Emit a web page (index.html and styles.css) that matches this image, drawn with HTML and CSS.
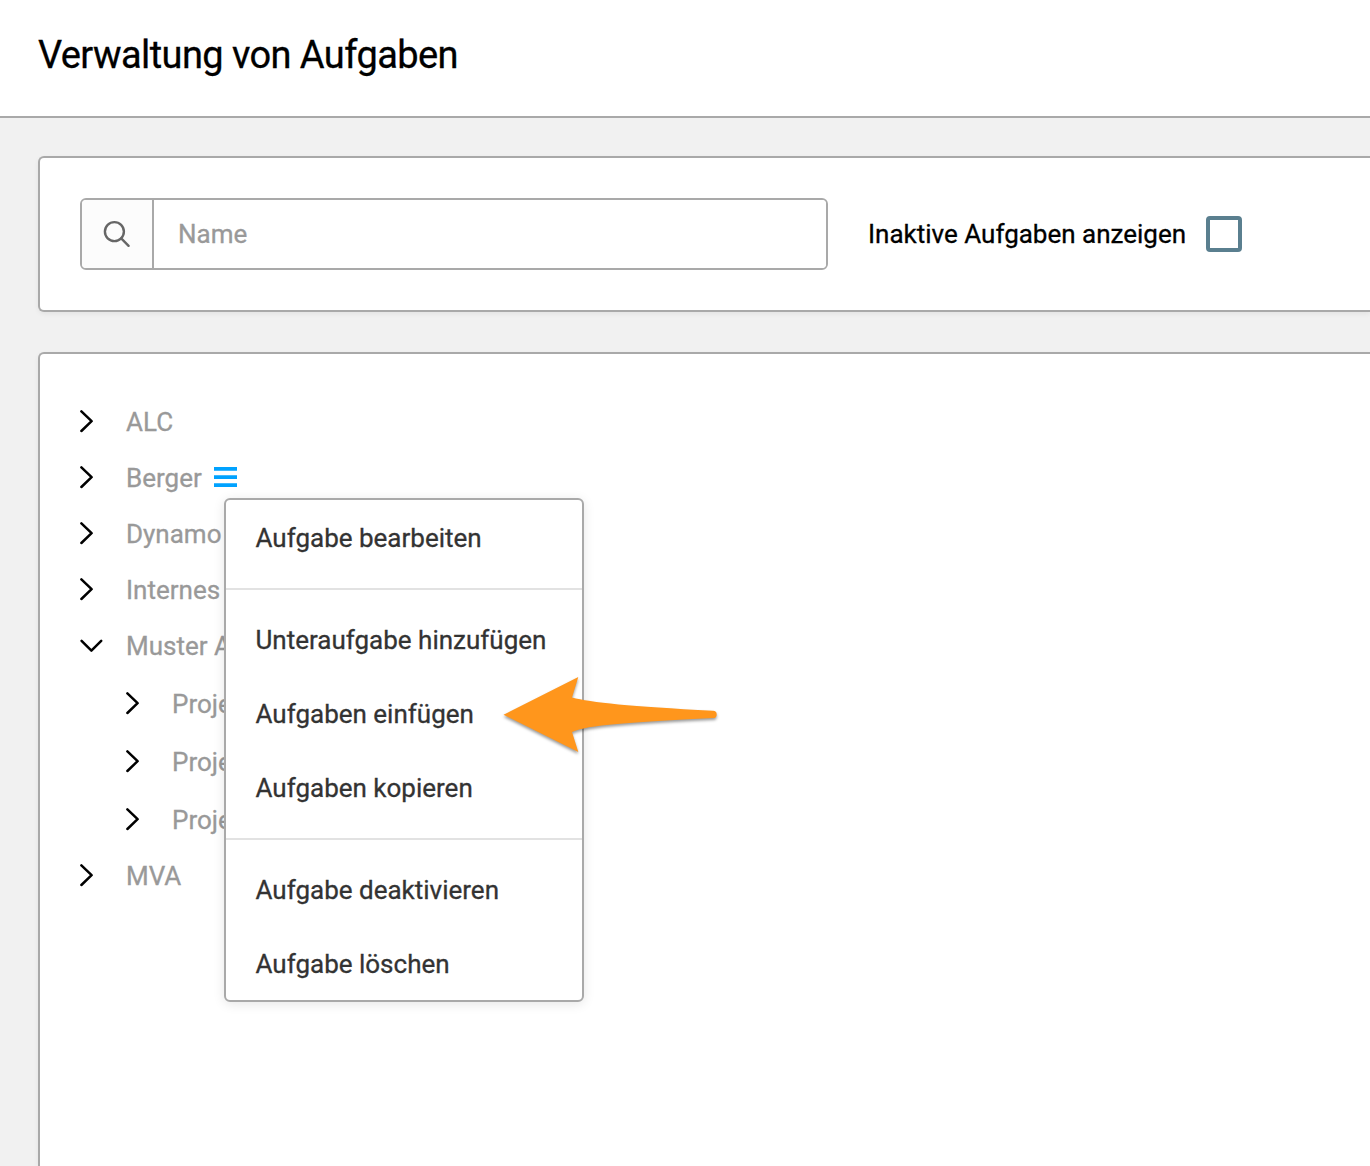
FILE: index.html
```html
<!DOCTYPE html>
<html lang="de">
<head>
<meta charset="utf-8">
<title>Verwaltung von Aufgaben</title>
<link rel="stylesheet" href="styles.css">
</head>
<body>
<svg class="sprite" aria-hidden="true">
  <symbol id="right" viewBox="0 0 26 26"><path d="M1.4 3.4 11.6 13.2 1.4 23"/></symbol>
  <symbol id="down" viewBox="0 0 26 26"><path d="M1.6 8.8 11.4 18.6 21.2 8.8"/></symbol>
</svg>
<header class="header"><h1 class="title">Verwaltung von Aufgaben</h1></header>
<main class="main">
  <section class="panel filter">
    <div class="search">
      <span class="search-icon"><svg width="30" height="30" viewBox="0 0 30 30"><circle cx="12.4" cy="12.6" r="9.5"/><path d="M19.2 19.4 26.6 26.8"/></svg></span>
      <input class="search-input" type="text" placeholder="Name" aria-label="Name">
    </div>
    <label class="inactive"><span class="inactive-text">Inaktive Aufgaben anzeigen</span><input class="checkbox" type="checkbox"></label>
  </section>
  <section class="panel tasks">
    <ul class="tree">
      <li class="row"><svg class="chevron"><use href="#right"/></svg><span class="label">ALC</span></li>
      <li class="row"><svg class="chevron"><use href="#right"/></svg><span class="label">Berger</span>
        <svg class="burger" width="24" height="20" viewBox="0 0 24 20"><path d="M0 0h23v3.7H0zM0 8.2h23v3.7H0zM0 16.3h23V20H0z"/></svg>
        <div class="menu">
          <div class="group"><div class="item">Aufgabe bearbeiten</div></div>
          <div class="group">
            <div class="item">Unteraufgabe hinzufügen</div>
            <div class="item">Aufgaben einfügen
              <svg class="arrow" width="230" height="90" viewBox="0 0 230 90"><path d="M3.5 44.7 78.3 7 72 27.4C91 32.5 130 36.2 213 40.7A3.7 3.7 0 0 1 213 48.1C130 52.3 88 55 72 62L78.3 82Z"/></svg>
            </div>
            <div class="item">Aufgaben kopieren</div>
          </div>
          <div class="group">
            <div class="item">Aufgabe deaktivieren</div>
            <div class="item">Aufgabe löschen</div>
          </div>
        </div>
      </li>
      <li class="row"><svg class="chevron"><use href="#right"/></svg><span class="label">Dynamo</span></li>
      <li class="row"><svg class="chevron"><use href="#right"/></svg><span class="label">Internes</span></li>
      <li>
        <div class="row"><svg class="chevron"><use href="#down"/></svg><span class="label">Muster AG</span></div>
        <ul class="subtree">
          <li class="row subrow"><svg class="chevron"><use href="#right"/></svg><span class="label">Projekt</span></li>
          <li class="row subrow"><svg class="chevron"><use href="#right"/></svg><span class="label">Projekt</span></li>
          <li class="row subrow"><svg class="chevron"><use href="#right"/></svg><span class="label">Projekt</span></li>
        </ul>
      </li>
      <li class="row"><svg class="chevron"><use href="#right"/></svg><span class="label">MVA</span></li>
    </ul>
  </section>
</main>
</body>
</html>
```
FILE: styles.css
```css
* { box-sizing: border-box; }
body {
  margin: 0;
  height: 1166px;
  display: flex;
  flex-direction: column;
  overflow: hidden;
  background: #f1f1f1;
  color: #000;
  font: 26px/30px Roboto, sans-serif;
  -webkit-text-stroke: .3px currentColor;
}
ul { margin: 0; padding: 0; list-style: none; }
.sprite { display: none; }
.header {
  height: 118px;
  flex: none;
  padding: 33px 38px 0;
  background: #fff;
  border-bottom: 2px solid #a9a9a9;
}
.title { margin: 0; font-size: 38px; line-height: 45px; font-weight: 400; letter-spacing: -.58px; }
.main {
  flex: 1;
  display: flex;
  flex-direction: column;
  gap: 40px;
  padding: 38px 0 0 38px;
}
.panel {
  background: #fff;
  border: 2px solid #a9a9a9;
  border-right: 0;
  border-radius: 6px 0 0 6px;
  box-shadow: 0 2px 5px rgba(0, 0, 0, .06);
}
.filter { flex: none; height: 156px; padding: 40px; display: flex; gap: 40px; }
.search {
  display: flex;
  width: 748px;
  height: 72px;
  border: 2px solid #a9a9a9;
  border-radius: 6px;
  overflow: hidden;
}
.search-icon {
  width: 72px;
  flex: none;
  padding: 19px 0 0 20px;
  background: #fcfcfc;
  border-right: 2px solid #a9a9a9;
}
.search-icon svg { display: block; fill: none; stroke: #666; stroke-width: 2.4; stroke-linecap: round; }
.search-input {
  flex: 1;
  min-width: 0;
  border: 0;
  padding: 0 24px;
  font: inherit;
  background: #fff;
}
.search-input::placeholder { color: #999; opacity: 1; }
.inactive { display: flex; align-items: center; gap: 20px; height: 72px; }
.inactive-text { width: 318px; white-space: nowrap; }
.checkbox {
  appearance: none;
  width: 36px;
  height: 36px;
  margin: 0;
  border: 4px solid #5a7f8f;
  border-radius: 4px;
  background: #fff;
}
.tasks { flex: 1; border-bottom: 0; border-radius: 6px 0 0 0; padding: 39px 40px 0; }
.row {
  position: relative;
  display: flex;
  align-items: center;
  height: 56px;
  color: #999;
}
.label { padding-top: 2px; }
.chevron {
  width: 26px;
  height: 26px;
  margin-right: 20px;
  fill: none;
  stroke: #000;
  stroke-width: 2.5;
  stroke-linecap: round;
  stroke-linejoin: round;
}
.subtree { padding-left: 46px; }
.subrow { height: 58px; padding-top: 2px; }
.burger { margin-left: 12px; fill: #00a2ff; }
/* Context menu of the selected task */
.menu {
  position: absolute;
  z-index: 2;
  top: 49px;
  left: 144px;
  width: 360px;
  background: #fff;
  border: 2px solid #a9a9a9;
  border-radius: 6px;
  box-shadow: 0 2px 12px rgba(0, 0, 0, .1);
  color: #333;
}
.group + .group { margin-top: 14px; padding-top: 12px; border-top: 2px solid #e2e2e2; }
.item { position: relative; height: 74px; padding: 23px 29.5px; white-space: nowrap; }
.arrow {
  position: absolute;
  top: -6px;
  left: 274px;
  fill: #ff961c;
  filter: drop-shadow(0 2px 1.5px rgba(0, 0, 0, .4));
}
```
